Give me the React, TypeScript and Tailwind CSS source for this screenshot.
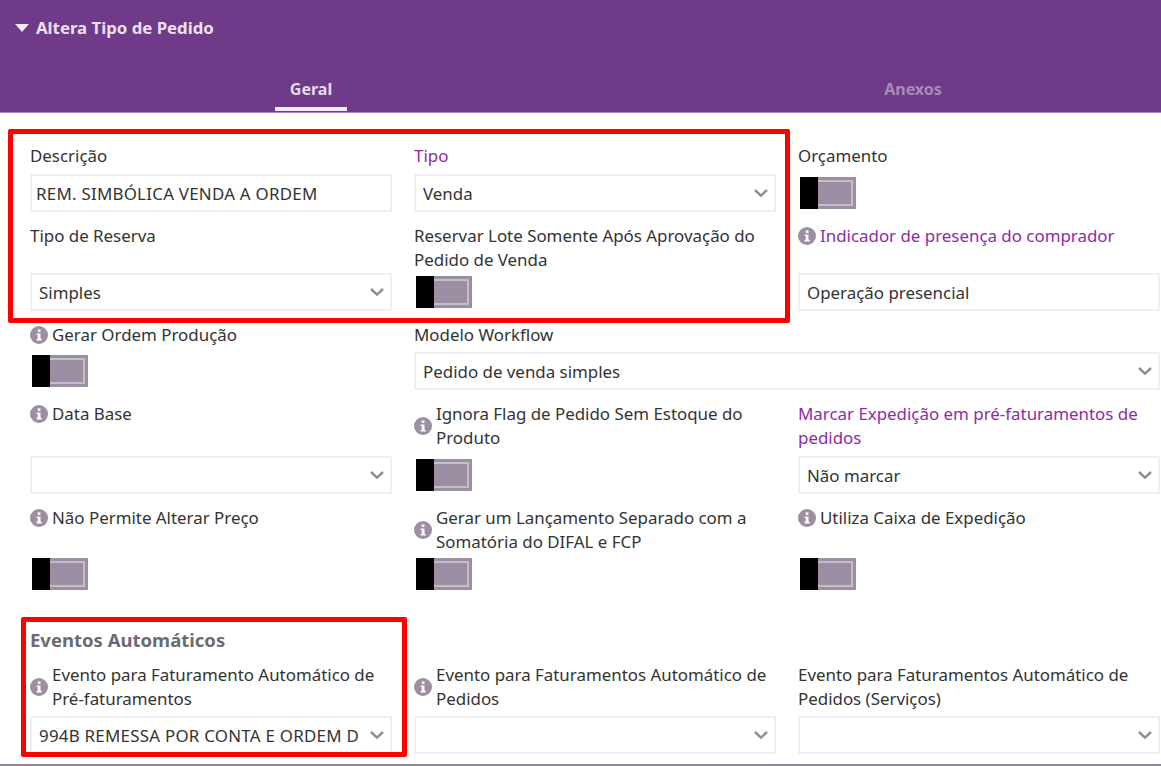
import type { ReactNode } from "react";

function InfoIcon() {
  return (
    <svg viewBox="0 0 16 16" className="w-[18px] h-[18px] shrink-0 mr-[4px]">
      <circle cx="8" cy="8" r="8" fill="#9c8ea3" />
      <rect x="6.9" y="3" width="2.4" height="2.3" fill="#fff" />
      <path d="M5.9 6.6h3.4v4.7h1v1.5H5.9v-1.5h1V8.1h-1z" fill="#fff" />
    </svg>
  );
}

function Chevron() {
  return (
    <svg viewBox="0 0 14 8" className="w-[14px] h-[8px] shrink-0 mr-[1px]">
      <path d="M1 1 7 6.6 13 1" fill="none" stroke="#8d8d8d" strokeWidth="2.4" />
    </svg>
  );
}

function Toggle() {
  return (
    <div className="flex w-[56px] h-[32px] ml-[2px] bg-[#9c8ea3]">
      <div className="w-[18px] h-full bg-black" />
      <div className="flex-1 p-[3px] pl-0">
        <div className="h-full border-[2px] border-l-0 border-[#c6bdcb]" />
      </div>
    </div>
  );
}

function Select({ value, caps }: { value?: string; caps?: boolean }) {
  return (
    <div className="flex items-center w-full h-[38px] bg-white border-2 border-[#f1eff6] pl-[7px] pr-[5px]">
      <span className={`flex-1 pt-[1px] whitespace-nowrap overflow-hidden ${caps ? "tracking-[0.25px]" : ""}`}>{value}</span>
      <Chevron />
    </div>
  );
}

function Input({ value, className = "pl-[4px]" }: { value: string; className?: string }) {
  return (
    <div className={`flex items-center w-full h-[38px] pt-[1px] bg-white border-2 border-[#f1eff6] ${className}`}>
      {value}
    </div>
  );
}

function Field({
  label,
  info,
  purple,
  className = "",
  gap = "mt-[6px]",
  children,
}: {
  label: ReactNode;
  info?: boolean;
  purple?: boolean;
  className?: string;
  gap?: string;
  children: ReactNode;
}) {
  return (
    <div className={`flex flex-col justify-between ${className}`}>
      <div className={`flex items-center leading-[24px] ${purple ? "text-[#8e2ba6]" : "text-[#333]"}`}>
        {info && <InfoIcon />}
        <span>{label}</span>
      </div>
      <div className={`flex items-center h-[38px] ${gap}`}>{children}</div>
    </div>
  );
}

export default function App() {
  return (
    <div className="relative w-[1161px] h-[766px] overflow-hidden bg-white text-[16.9px] text-[#333] font-['Noto_Sans',sans-serif]">
      <header className="h-[113px] bg-[#6f3a87] border-b border-[#a984c0] flex flex-col justify-between">
        <div className="flex items-center pt-[16px] pl-[15px] leading-[24px] text-[16.8px] font-bold text-[#e9e1f0]">
          <svg viewBox="0 0 14 8" className="w-[14px] h-[8px] mr-[7px]">
            <path d="M0 0h14L7 8z" fill="#f0eaf4" />
          </svg>
          Altera Tipo de Pedido
        </div>
        <nav className="flex pl-[275px] text-[16px] font-bold mb-[1px]">
          <div className="w-[72px] pb-[6px] border-b-[4px] border-[#f1ebf5] text-center text-[#e4daec] leading-[24px]">Geral</div>
          <div className="w-[60px] ml-[536px] pb-[6px] text-center text-[#a68cb7] leading-[24px]">Anexos</div>
        </nav>
      </header>

      <main className="pl-[30px] pr-[1px] pt-[31px]">
        <div className="grid grid-cols-3 gap-x-[22px] gap-y-[12px]">
          <Field label="Descrição">
            <Input value="REM. SIMBÓLICA VENDA A ORDEM" className="pl-[4px] tracking-[0.25px]" />
          </Field>
          <Field label="Tipo" purple>
            <Select value="Venda" />
          </Field>
          <Field label="Orçamento">
            <Toggle />
          </Field>

          <Field label="Tipo de Reserva" gap="mt-[1px]">
            <Select value="Simples" />
          </Field>
          <Field label="Reservar Lote Somente Após Aprovação do Pedido de Venda" gap="mt-[1px]">
            <Toggle />
          </Field>
          <Field label="Indicador de presença do comprador" info purple gap="mt-[1px]">
            <Input value="Operação presencial" className="pl-[7px]" />
          </Field>

          <Field label="Gerar Ordem Produção" info gap="mt-[5px]">
            <Toggle />
          </Field>
          <Field label="Modelo Workflow" className="col-span-2" gap="mt-[5px]">
            <Select value="Pedido de venda simples" />
          </Field>

          <Field label="Data Base" info>
            <Select />
          </Field>
          <Field label="Ignora Flag de Pedido Sem Estoque do Produto" info>
            <Toggle />
          </Field>
          <Field label="Marcar Expedição em pré-faturamentos de pedidos" purple>
            <Select value="Não marcar" />
          </Field>

          <Field label="Não Permite Alterar Preço" info gap="mt-[1px]">
            <Toggle />
          </Field>
          <Field label="Gerar um Lançamento Separado com a Somatória do DIFAL e FCP" info gap="mt-[1px]">
            <Toggle />
          </Field>
          <Field label="Utiliza Caixa de Expedição" info gap="mt-[1px]">
            <Toggle />
          </Field>
        </div>

        <h2 className="mt-[35px] mb-[11px] leading-[24px] text-[18.5px] font-bold text-[#6e6a72]">Eventos Automáticos</h2>

        <div className="grid grid-cols-3 gap-x-[22px]">
          <Field label="Evento para Faturamento Automático de Pré-faturamentos" info gap="mt-[5px]">
            <Select value="994B REMESSA POR CONTA E ORDEM D" caps />
          </Field>
          <Field label="Evento para Faturamentos Automático de Pedidos" info gap="mt-[5px]">
            <Select />
          </Field>
          <Field label="Evento para Faturamentos Automático de Pedidos (Serviços)" gap="mt-[5px]">
            <Select />
          </Field>
        </div>
      </main>

      {/* marcacoes vermelhas por cima do print */}
      <div className="absolute left-[8px] top-[129px] w-[782px] h-[194px] border-[5px] border-[#ff0000] rounded-[2px] pointer-events-none" />
      <div className="absolute left-[21px] top-[617px] w-[386px] h-[140px] border-[5px] border-[#ff0000] rounded-[2px] pointer-events-none" />
      <div className="absolute left-0 right-0 bottom-0 h-[2px] bg-[#8f8794]" />
    </div>
  );
}
